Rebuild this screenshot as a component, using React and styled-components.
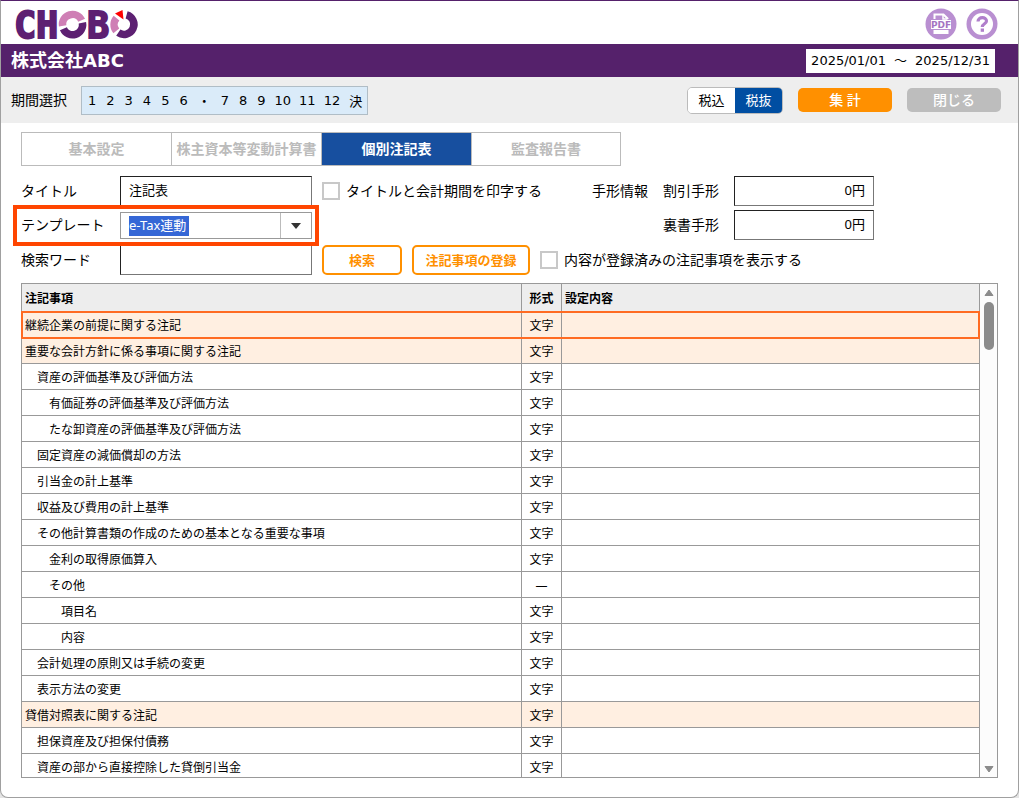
import React, { useState } from 'react';
import styled, { createGlobalStyle } from 'styled-components';

const GlobalStyle = createGlobalStyle`
  * {
    box-sizing: border-box;
  }
  body {
    margin: 0;
    background-color: #e4e4e4;
    color: #000;
    font-family: "Noto Sans", "Noto Sans CJK JP", sans-serif;
    font-size: 14px;
  }
  button, input, select {
    font-family: inherit;
    font-size: inherit;
    color: inherit;
    margin: 0;
  }
`;

const Window = styled.div`
  display: flex;
  flex-direction: column;
  height: 100vh;
  background-color: #fff;
  border: 1px solid #a0a0a0;
  border-top-color: #55216b;
  border-radius: 0 0 8px 8px;
  overflow: hidden;
`;

const Header = styled.header`
  display: flex;
  align-items: center;
  justify-content: space-between;
  height: 43px;
  padding: 2px 20px 0 10px;
`;

const LogoSvg = styled.svg`
  display: block;
  overflow: visible;
`;

const HeaderIcons = styled.div`
  display: flex;
  gap: 9px;
`;

const IconButton = styled.button`
  display: block;
  width: 32px;
  height: 32px;
  padding: 0;
  border: none;
  background: none;
  cursor: pointer;
`;

const CompanyBar = styled.div`
  display: flex;
  align-items: center;
  justify-content: space-between;
  height: 33px;
  padding: 0 23px 0 10px;
  background-color: #55216b;
  color: #fff;
`;

const CompanyName = styled.h1`
  margin: 0;
  font-family: "DejaVu Sans", "Noto Sans CJK JP", sans-serif;
  font-size: 18px;
  line-height: 24px;
`;

const Term = styled.div`
  display: flex;
  gap: 8px;
  padding: 0 5px;
  background-color: #fff;
  color: #000;
  font-family: "DejaVu Sans", "Noto Sans CJK JP", sans-serif;
  font-size: 13px;
  line-height: 24px;
`;

const Toolbar = styled.div`
  display: flex;
  align-items: center;
  height: 46px;
  padding: 0 17px 0 10px;
  background-color: #eee;
`;

const Months = styled.div`
  display: flex;
  height: 29px;
  margin-left: 14px;
  padding-left: 1px;
  border: 1px solid #b0bdc6;
  background-color: #daebf9;
`;

const MonthButton = styled.button`
  padding: 0 ${(props) => (props.$wide ? 4 : 5)}px;
  border: none;
  background: none;
  font-family: "DejaVu Sans", "Noto Sans CJK JP", sans-serif;
  font-size: 13px;
  cursor: pointer;
`;

const ToolbarActions = styled.div`
  display: flex;
  align-items: center;
  gap: 15px;
  margin-left: auto;
`;

const TaxSwitch = styled.div`
  display: flex;
  height: 27px;
  border: 1px solid #bbb;
  border-radius: 5px;
  overflow: hidden;
`;

const TaxButton = styled.button`
  width: 47px;
  padding: 0 0 2px;
  border: none;
  background-color: ${(props) => (props.$active ? '#004ea2' : '#fff')};
  color: ${(props) => (props.$active ? '#fff' : '#000')};
  font-size: 13px;
  cursor: pointer;
`;

const ActionButton = styled.button`
  width: 94px;
  height: 24px;
  padding: 0;
  border: none;
  border-radius: 5px;
  background-color: ${(props) => (props.$muted ? '#bdbdbd' : '#ff9000')};
  color: #fff;
  font-weight: 500;
  line-height: 24px;
  cursor: pointer;
`;

const Main = styled.main`
  display: flex;
  flex: 1;
  flex-direction: column;
  min-height: 0;
  padding: 9px 20px 19px;
`;

const Tabs = styled.div`
  display: flex;
  align-self: flex-start;
  height: 34px;
  border: 1px solid #bbb;
`;

const Tab = styled.button`
  width: 150px;
  padding: 0 0 2px;
  border: none;
  border-right: 1px solid #bbb;
  background-color: ${(props) => (props.$active ? '#174f9f' : '#fff')};
  color: ${(props) => (props.$active ? '#fff' : '#bbb')};
  font-weight: bold;
  white-space: nowrap;
  cursor: pointer;
  &:last-child {
    width: 148px;
    border-right: none;
  }
`;

const Form = styled.div`
  display: flex;
  flex-direction: column;
  gap: 5px;
  padding: 10px 0 8px;
`;

const FormTop = styled.div`
  display: flex;
`;

const FormColumn = styled.div`
  display: flex;
  flex-direction: column;
  gap: 4px;
  width: 571px;
`;

const FormRow = styled.div`
  display: flex;
  align-items: center;
  gap: 10px;
  height: 30px;
`;

const TemplateRow = styled(FormRow)`
  position: relative;
  align-self: flex-start;
  &::after {
    content: "";
    position: absolute;
    inset: -5px -7px -6px -8px;
    border: 4px solid #ff4500;
    pointer-events: none;
  }
`;

const LabelText = styled.span`
  padding-bottom: 3px;
`;

const Field = styled.label`
  display: flex;
  align-items: center;
  > ${LabelText} {
    width: 99px;
  }
`;

const TextInput = styled.input`
  width: 192px;
  height: 30px;
  padding: 0 8px 3px;
  border: 1px solid #222;
  border-right-color: #777;
  border-bottom-color: #777;
  border-radius: 0;
  background-color: #fff;
  font-size: 13px;
`;

const AmountInput = styled(TextInput)`
  width: 140px;
  text-align: right;
`;

const SelectBox = styled.div`
  position: relative;
  width: 192px;
  height: 27px;
  svg {
    position: absolute;
    top: 1px;
    right: 0;
    pointer-events: none;
  }
`;

const Select = styled.select`
  appearance: none;
  width: 100%;
  height: 100%;
  padding: 0 32px 0 8px;
  border: 1px solid #999;
  border-radius: 0;
  background: linear-gradient(#3567d6, #3567d6) 8px 3px / 60px 20px no-repeat #fff;
  color: #fff;
  font-size: 13px;
  option {
    color: #000;
  }
`;

const CheckLabel = styled.label`
  display: flex;
  align-items: center;
  gap: 6px;
  white-space: nowrap;
`;

const Checkbox = styled.input`
  appearance: none;
  width: 18px;
  height: 18px;
  border: 2px solid #c8c8c8;
  background-color: #fff;
  &:checked {
    background-color: #174f9f;
  }
`;

const Bills = styled.div`
  display: grid;
  grid-template-columns: 71px auto;
  row-gap: 4px;
  align-items: center;
`;

const BillField = styled.label`
  display: flex;
  grid-column: 2;
  align-items: center;
  gap: 15px;
`;

const OutlineButton = styled.button`
  width: ${(props) => props.$width}px;
  height: 30px;
  padding: 0 0 2px;
  border: 2px solid #ff9000;
  border-radius: 5px;
  background-color: #fff;
  color: #ff9000;
  font-size: 13px;
  font-weight: bold;
  cursor: pointer;
`;

const Panel = styled.div`
  display: flex;
  flex: 1;
  min-height: 0;
  border: 1px solid #999;
  border-left: none;
`;

const Viewport = styled.div`
  flex: 1;
  overflow: hidden;
`;

const Table = styled.table`
  width: 100%;
  table-layout: fixed;
  border-collapse: separate;
  border-spacing: 0;
  font-size: 12px;
`;

const HeadCell = styled.th`
  width: ${(props) => props.$width};
  height: 28px;
  padding: 2px 3px 0;
  border-right: 1px solid #999;
  border-bottom: 1px solid #999;
  background-color: #ededed;
  line-height: 18px;
  text-align: ${(props) => props.$align || 'left'};
  &:first-child {
    border-left: 1px solid #999;
  }
`;

const Cell = styled.td`
  height: 26px;
  padding: 2px 3px 0;
  border-right: 1px solid #999;
  border-bottom: 1px solid #999;
  line-height: 18px;
  text-align: ${(props) => props.$align || 'left'};
  white-space: nowrap;
  &:first-child {
    padding-left: ${(props) => 3 + (props.$level || 0) * 12}px;
    border-left: 1px solid #999;
  }
`;

const Row = styled.tr`
  position: relative;
  background-color: ${(props) => (props.$heading ? '#ffefe1' : '#fff')};
  > ${Cell}:first-child::after {
    content: "";
    display: ${(props) => (props.$selected ? 'block' : 'none')};
    position: absolute;
    z-index: 1;
    inset: -1px 0 -1px 0;
    border: 2px solid #ff6b22;
    pointer-events: none;
  }
`;

const ScrollBar = styled.div`
  display: flex;
  flex-direction: column;
  align-items: center;
  width: 17px;
  padding: 4px 0 3px 1px;
  background-color: #fcfcfc;
`;

const ScrollArrow = styled.button`
  width: 10px;
  height: 9px;
  padding: 0;
  border: none;
  background: none;
  svg {
    display: block;
  }
`;

const ScrollThumb = styled.div`
  width: 10px;
  height: 48px;
  margin: 5px 0 auto;
  border-radius: 5px;
  background-color: #8b8b8b;
`;

const months = ['1', '2', '3', '4', '5', '6', '・', '7', '8', '9', '10', '11', '12', '決'];

const tabs = ['基本設定', '株主資本等変動計算書', '個別注記表', '監査報告書'];

const notes = [
  { name: '継続企業の前提に関する注記', level: 0, type: '文字' },
  { name: '重要な会計方針に係る事項に関する注記', level: 0, type: '文字' },
  { name: '資産の評価基準及び評価方法', level: 1, type: '文字' },
  { name: '有価証券の評価基準及び評価方法', level: 2, type: '文字' },
  { name: 'たな卸資産の評価基準及び評価方法', level: 2, type: '文字' },
  { name: '固定資産の減価償却の方法', level: 1, type: '文字' },
  { name: '引当金の計上基準', level: 1, type: '文字' },
  { name: '収益及び費用の計上基準', level: 1, type: '文字' },
  { name: 'その他計算書類の作成のための基本となる重要な事項', level: 1, type: '文字' },
  { name: '金利の取得原価算入', level: 2, type: '文字' },
  { name: 'その他', level: 2, type: '―' },
  { name: '項目名', level: 3, type: '文字' },
  { name: '内容', level: 3, type: '文字' },
  { name: '会計処理の原則又は手続の変更', level: 1, type: '文字' },
  { name: '表示方法の変更', level: 1, type: '文字' },
  { name: '貸借対照表に関する注記', level: 0, type: '文字' },
  { name: '担保資産及び担保付債務', level: 1, type: '文字' },
  { name: '資産の部から直接控除した貸倒引当金', level: 1, type: '文字' },
];

function Logo() {
  return (
    <LogoSvg width="132" height="36" viewBox="0 0 132 36" role="img" aria-label="CHOBO">
      <g fill="#5d2072" stroke="#5d2072" strokeWidth="1.800" fontFamily="'DejaVu Sans Mono', monospace" fontWeight="bold" fontSize="37">
        <text x="3" y="32">C</text>
        <text x="25" y="32">H</text>
        <text x="76" y="32">B</text>
      </g>
      <g fill="none" strokeWidth="7.500">
        <path d="M51.6 19.900A10 10 0 0 1 70.6 14.3" stroke="#cf7fb5" />
        <path d="M71.4 16.800A10 10 0 0 1 52.4 22.7" stroke="#5d2072" />
        <path d="M115.6 8.800A10 10 0 1 1 107.3 26.7" stroke="#5d2072" />
        <path d="M105.3 24.900A10 10 0 0 1 105.5 12.1" stroke="#cf7fb5" />
      </g>
      <path d="M104 7.500L111.500 4L112.500 13.500Z" fill="#f00" />
    </LogoSvg>
  );
}

function PdfIcon() {
  return (
    <svg width="32" height="32" viewBox="0 0 32 32">
      <circle cx="16" cy="16" r="15.500" fill="#b98fd1" />
      <path d="M9.500 11V6.500H18.500L22.500 10.500V11" fill="none" stroke="#fff" strokeWidth="2" />
      <path d="M18 6.500V11H22.500" fill="none" stroke="#fff" strokeWidth="1.500" />
      <rect x="6" y="12" width="20" height="9" fill="#fff" />
      <text x="16" y="20" textAnchor="middle" fill="#a574c2" fontFamily="'DejaVu Sans', sans-serif" fontWeight="bold" fontSize="9">PDF</text>
      <path d="M8.500 22H23.500V26H8.500Z" fill="#fff" />
    </svg>
  );
}

function HelpIcon() {
  return (
    <svg width="32" height="32" viewBox="0 0 32 32">
      <circle cx="16" cy="16" r="15.500" fill="#b98fd1" />
      <circle cx="16" cy="16" r="11" fill="#fff" />
      <path d="M12 13.500C12 8.500 20.500 8.500 20.500 13C20.500 16 16.300 15.500 16.300 19" fill="none" stroke="#b07fcb" strokeWidth="3.200" />
      <rect x="14.700" y="20.500" width="3.300" height="3.300" fill="#b07fcb" />
    </svg>
  );
}

export default function App() {
  const [tax, setTax] = useState('税抜');
  const [tab, setTab] = useState('個別注記表');
  const [selected, setSelected] = useState(0);

  return (
    <>
      <GlobalStyle />
      <Window>
        <Header>
          <Logo />
          <HeaderIcons>
            <IconButton aria-label="PDF"><PdfIcon /></IconButton>
            <IconButton aria-label="ヘルプ"><HelpIcon /></IconButton>
          </HeaderIcons>
        </Header>
        <CompanyBar>
          <CompanyName>株式会社ABC</CompanyName>
          <Term>
            <span>2025/01/01</span>
            <span>～</span>
            <span>2025/12/31</span>
          </Term>
        </CompanyBar>
        <Toolbar>
          <LabelText>期間選択</LabelText>
          <Months>
            {months.map((month) => (
              <MonthButton key={month} $wide={month.length > 1}>{month}</MonthButton>
            ))}
          </Months>
          <ToolbarActions>
            <TaxSwitch>
              {['税込', '税抜'].map((name) => (
                <TaxButton key={name} $active={name === tax} onClick={() => setTax(name)}>{name}</TaxButton>
              ))}
            </TaxSwitch>
            <ActionButton>集 計</ActionButton>
            <ActionButton $muted>閉じる</ActionButton>
          </ToolbarActions>
        </Toolbar>
        <Main>
          <Tabs>
            {tabs.map((name) => (
              <Tab key={name} $active={name === tab} onClick={() => setTab(name)}>{name}</Tab>
            ))}
          </Tabs>
          <Form>
            <FormTop>
              <FormColumn>
                <FormRow>
                  <Field>
                    <LabelText>タイトル</LabelText>
                    <TextInput defaultValue="注記表" />
                  </Field>
                  <CheckLabel>
                    <Checkbox type="checkbox" />
                    <LabelText>タイトルと会計期間を印字する</LabelText>
                  </CheckLabel>
                </FormRow>
                <TemplateRow>
                  <Field>
                    <LabelText>テンプレート</LabelText>
                    <SelectBox>
                      <Select defaultValue="e-Tax連動">
                        <option>e-Tax連動</option>
                      </Select>
                      <svg width="32" height="25" viewBox="0 0 32 25">
                        <path d="M0.500 0V25" stroke="#bbb" />
                        <path d="M11 10H21L16 16Z" fill="#333" />
                      </svg>
                    </SelectBox>
                  </Field>
                </TemplateRow>
              </FormColumn>
              <Bills>
                <LabelText>手形情報</LabelText>
                <BillField>
                  <LabelText>割引手形</LabelText>
                  <AmountInput defaultValue="0円" />
                </BillField>
                <BillField>
                  <LabelText>裏書手形</LabelText>
                  <AmountInput defaultValue="0円" />
                </BillField>
              </Bills>
            </FormTop>
            <FormRow>
              <Field>
                <LabelText>検索ワード</LabelText>
                <TextInput />
              </Field>
              <OutlineButton $width={80}>検索</OutlineButton>
              <OutlineButton $width={118}>注記事項の登録</OutlineButton>
              <CheckLabel>
                <Checkbox type="checkbox" />
                <LabelText>内容が登録済みの注記事項を表示する</LabelText>
              </CheckLabel>
            </FormRow>
          </Form>
          <Panel>
            <Viewport>
              <Table>
                <thead>
                  <tr>
                    <HeadCell $width="501px">注記事項</HeadCell>
                    <HeadCell $width="40px" $align="center">形式</HeadCell>
                    <HeadCell>設定内容</HeadCell>
                  </tr>
                </thead>
                <tbody>
                  {notes.map((note, index) => (
                    <Row
                      key={note.name}
                      $heading={note.level === 0}
                      $selected={index === selected}
                      onClick={() => setSelected(index)}
                    >
                      <Cell $level={note.level}>{note.name}</Cell>
                      <Cell $align="center">{note.type}</Cell>
                      <Cell />
                    </Row>
                  ))}
                </tbody>
              </Table>
            </Viewport>
            <ScrollBar>
              <ScrollArrow aria-label="上へ">
                <svg width="10" height="9" viewBox="0 0 10 9"><path d="M5 2L9 7.500H1Z" fill="#8b8b8b" stroke="#8b8b8b" strokeLinejoin="round" /></svg>
              </ScrollArrow>
              <ScrollThumb />
              <ScrollArrow aria-label="下へ">
                <svg width="10" height="9" viewBox="0 0 10 9"><path d="M5 7L9 1.500H1Z" fill="#8b8b8b" stroke="#8b8b8b" strokeLinejoin="round" /></svg>
              </ScrollArrow>
            </ScrollBar>
          </Panel>
        </Main>
      </Window>
    </>
  );
}
